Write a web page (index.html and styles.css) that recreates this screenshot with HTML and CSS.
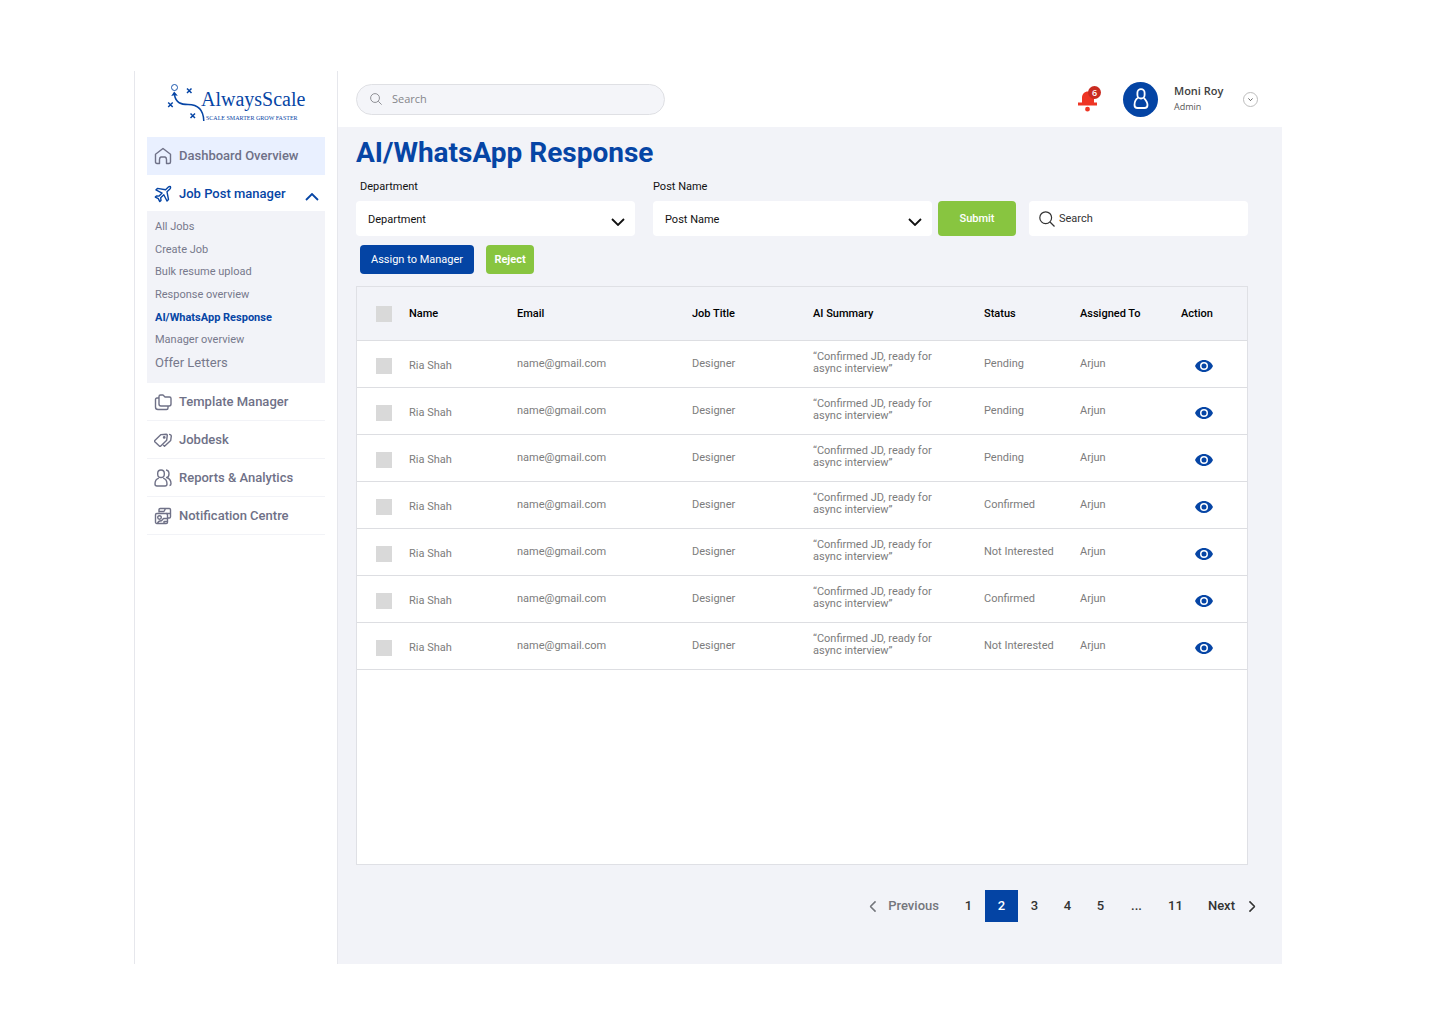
FILE: index.html
```html
<!DOCTYPE html>
<html lang="en">
<head>
<meta charset="utf-8">
<meta name="viewport" content="width=device-width, initial-scale=1">
<title>AI/WhatsApp Response - AlwaysScale</title>
<link rel="stylesheet" href="styles.css">
</head>
<body>
<svg class="sprite" aria-hidden="true">
  <symbol id="eye" viewBox="0 0 18 12"><path fill="currentColor" fill-rule="evenodd" d="M9 0C5 0 1.600 2.500 0 6c1.600 3.500 5 6 9 6s7.400-2.500 9-6c-1.600-3.500-5-6-9-6zm0 10a4 4 0 1 1 0-8 4 4 0 0 1 0 8zm0-1.500a2.500 2.500 0 1 0 0-5 2.500 2.500 0 0 0 0 5z"/></symbol>
  <symbol id="chevron" viewBox="0 0 14 8"><path fill="none" stroke="currentColor" stroke-width="1.800" d="M1 1l6 6 6-6"/></symbol>
  <symbol id="search" viewBox="0 0 16 16"><circle cx="6.700" cy="6.700" r="5.900" fill="none" stroke="currentColor" stroke-width="1.200"/><path fill="none" stroke="currentColor" stroke-width="1.200" d="M11 11l4.500 4.500"/></symbol>
</svg>
<div class="app">
  <aside class="sidebar">
    <a class="logo" href="#">
      <svg class="logo-mark" viewBox="0 0 38 40" width="38" height="40" fill="none" stroke="currentColor" aria-hidden="true">
        <circle cx="7.500" cy="4.500" r="3" stroke-width="0.900"/>
        <path stroke-width="1.500" d="M7.500 12C9 20 14 21.500 21 21.500c10 0 15.500 6 15.800 16.500"/>
        <path fill="currentColor" stroke="none" d="M7.200 8.500l-3 4.500 3-.8 3.600.6z"/>
        <path stroke-width="1.500" d="M20 5.500l4.500 4.500m0-4.500L20 10M1.200 19.500l4.500 4.500m0-4.500L1.200 24M23.500 30.500L28 35m0-4.500L23.500 35"/>
      </svg>
      <span class="logo-text"><span class="logo-name">AlwaysScale</span><span class="logo-tag">SCALE SMARTER GROW FASTER</span></span>
    </a>
    <nav>
      <a class="nav-item highlighted" href="#">
        <svg viewBox="0 0 18 18" class="nav-icon" aria-hidden="true"><path d="M1.500 15V7.200L9 1.500l7.500 5.700V15q0 1.500-1.500 1.500h-2.500v-4q0-2-1.500-2.500h-4q-1.500.5-1.500 2.500v4H3Q1.500 16.500 1.500 15z"/></svg>
        Dashboard Overview</a>
      <a class="nav-item open" href="#">
        <svg viewBox="0 0 18 18" class="nav-icon" aria-hidden="true"><path d="M11.600 4.800l2.800-2.700c.8-.8 2.200-.8 2.200.1 0 .8-.2 1.400-.7 1.900L13 6.800l1.500 7.700-1.500 1.500-3.200-6.200-3.100 3 .3 2.600-1.200 1.200-1.500-3-3-1.500 1.200-1.200 2.600.2 3-3L1.900 4.900l1.500-1.500z"/></svg>
        <span class="nav-label">Job Post manager</span>
        <svg class="chev up" aria-hidden="true"><use href="#chevron"/></svg></a>
      <ul class="subnav">
        <li><a href="#">All Jobs</a></li>
        <li><a href="#">Create Job</a></li>
        <li><a href="#">Bulk resume upload</a></li>
        <li><a href="#">Response overview</a></li>
        <li><a href="#" class="current" aria-current="page">AI/WhatsApp Response</a></li>
        <li><a href="#">Manager overview</a></li>
        <li><a href="#" class="large">Offer Letters</a></li>
      </ul>
      <a class="nav-item ruled" href="#">
        <svg viewBox="0 0 18 18" class="nav-icon" aria-hidden="true"><path d="M5 3.500q0-1.500 1.500-1.500H9l2 2h4.500Q17 4 17 5.500V11q0 2-2 2H7q-2 0-2-2zM5 5H3Q1.500 5 1.500 6.500V14q0 2.500 2.500 2.500h8.500q1.500 0 1.500-1.500v-2"/></svg>
        Template Manager</a>
      <a class="nav-item ruled" href="#">
        <svg viewBox="0 0 18 18" class="nav-icon" aria-hidden="true"><path d="M.8 9.500L7 3.600l5.300-.4q1 0 1 1l-.6 5L6.800 15q-.8.700-1.500 0L.8 10.800q-.6-.7 0-1.300zM15 3.400q2.300 0 2.300 1.800l-.6 4.300L10.500 15.300 9.300 14"/><circle cx="10.200" cy="6.400" r=".7"/></svg>
        Jobdesk</a>
      <a class="nav-item ruled" href="#">
        <svg viewBox="0 0 18 18" class="nav-icon" aria-hidden="true"><rect x="3.700" y="1" width="6.600" height="7.500" rx="3.300"/><path d="M4.800 9.200Q1 10.500 1 15q0 2 2 2h8q2 0 2-2 0-4.500-3.800-5.800M12 1q3 .3 3 3.800T12.600 8.500q4.400 1.500 4.400 6.200 0 1.500-1.500 1.800"/></svg>
        Reports &amp; Analytics</a>
      <a class="nav-item ruled" href="#">
        <svg viewBox="0 0 18 18" class="nav-icon" aria-hidden="true"><path d="M5 5.500V2.800q0-1.300 1.300-1.300h9q1.200 0 1.200 1.300v7q0 1.200-1.200 1.200h-1.800M5 4.500h5M12 6.500h4.500M11.500 1.500l-1.500 3"/><rect x="1.500" y="6.500" width="12" height="10" rx="1.300"/><circle cx="5.500" cy="10.500" r="1.800"/><path d="M3.500 16.500q1-3 4-2.800l2-2.200h4M10 16.500v-2h3.500"/></svg>
        Notification Centre</a>
    </nav>
  </aside>

  <div class="main">
    <header class="topbar">
      <label class="top-search">
        <svg aria-hidden="true"><use href="#search"/></svg>
        <input type="text" placeholder="Search" aria-label="Search site">
      </label>
      <div class="account">
        <button class="bell" type="button" aria-label="Notifications">
          <svg viewBox="0 0 24 26" width="24" height="26" aria-hidden="true"><path fill="#ee3524" d="M5 17.500V12c0-4 2.500-6.500 6-6.500s6 2.500 6 6.500v5.500zM1 16.500h19v3H1zM10.500 20.800a2.400 2.400 0 1 1 0 4.800 2.400 2.400 0 0 1 0-4.800z"/></svg>
          <span class="badge">6</span>
        </button>
        <span class="avatar">
          <svg viewBox="0 0 16 22" width="16" height="22" fill="none" stroke="#fff" stroke-width="1.800" aria-hidden="true"><rect x="4.400" y="1.200" width="7.200" height="9.300" rx="3.600"/><path d="M5.200 9.800C2.700 11.200 1.500 13.800 1.500 17q0 3 3 3h7q3 0 3-3 0-3.200-3.700-7.200"/></svg>
        </span>
        <div class="who"><strong>Moni Roy</strong><span>Admin</span></div>
        <button class="more" type="button" aria-label="Account menu"><svg aria-hidden="true"><use href="#chevron"/></svg></button>
      </div>
    </header>

    <main class="content">
      <h1>AI/WhatsApp Response</h1>
      <form class="filters">
        <div class="fields">
          <div class="field">
            <label class="field-label inset" for="department">Department</label>
            <div class="select"><select id="department"><option>Department</option></select><svg class="chev" aria-hidden="true"><use href="#chevron"/></svg></div>
          </div>
          <div class="field">
            <label class="field-label" for="post">Post Name</label>
            <div class="select"><select id="post"><option>Post Name</option></select><svg class="chev" aria-hidden="true"><use href="#chevron"/></svg></div>
          </div>
        </div>
        <button class="submit" type="submit">Submit</button>
        <label class="table-search">
          <svg aria-hidden="true"><use href="#search"/></svg>
          <input type="text" placeholder="Search" aria-label="Search responses">
        </label>
      </form>
      <div class="actions">
        <button class="assign" type="button">Assign to Manager</button>
        <button class="reject" type="button">Reject</button>
      </div>

      <div class="table-card">
        <table>
          <colgroup><col class="c-check"><col class="c-name"><col class="c-email"><col class="c-job"><col class="c-summary"><col class="c-status"><col class="c-assigned"><col class="c-action"></colgroup>
          <thead>
            <tr><th><input type="checkbox" aria-label="Select all"></th><th>Name</th><th>Email</th><th>Job Title</th><th>AI Summary</th><th>Status</th><th>Assigned To</th><th>Action</th></tr>
          </thead>
          <tbody>
            <tr><td class="low"><input type="checkbox" aria-label="Select row 1"></td><td class="low">Ria Shah</td><td>name@gmail.com</td><td>Designer</td><td class="summary">“Confirmed JD, ready for<br>async interview”</td><td>Pending</td><td>Arjun</td><td class="low"><button class="view" type="button" aria-label="View"><svg><use href="#eye"/></svg></button></td></tr>
            <tr><td class="low"><input type="checkbox" aria-label="Select row 2"></td><td class="low">Ria Shah</td><td>name@gmail.com</td><td>Designer</td><td class="summary">“Confirmed JD, ready for<br>async interview”</td><td>Pending</td><td>Arjun</td><td class="low"><button class="view" type="button" aria-label="View"><svg><use href="#eye"/></svg></button></td></tr>
            <tr><td class="low"><input type="checkbox" aria-label="Select row 3"></td><td class="low">Ria Shah</td><td>name@gmail.com</td><td>Designer</td><td class="summary">“Confirmed JD, ready for<br>async interview”</td><td>Pending</td><td>Arjun</td><td class="low"><button class="view" type="button" aria-label="View"><svg><use href="#eye"/></svg></button></td></tr>
            <tr><td class="low"><input type="checkbox" aria-label="Select row 4"></td><td class="low">Ria Shah</td><td>name@gmail.com</td><td>Designer</td><td class="summary">“Confirmed JD, ready for<br>async interview”</td><td>Confirmed</td><td>Arjun</td><td class="low"><button class="view" type="button" aria-label="View"><svg><use href="#eye"/></svg></button></td></tr>
            <tr><td class="low"><input type="checkbox" aria-label="Select row 5"></td><td class="low">Ria Shah</td><td>name@gmail.com</td><td>Designer</td><td class="summary">“Confirmed JD, ready for<br>async interview”</td><td>Not Interested</td><td>Arjun</td><td class="low"><button class="view" type="button" aria-label="View"><svg><use href="#eye"/></svg></button></td></tr>
            <tr><td class="low"><input type="checkbox" aria-label="Select row 6"></td><td class="low">Ria Shah</td><td>name@gmail.com</td><td>Designer</td><td class="summary">“Confirmed JD, ready for<br>async interview”</td><td>Confirmed</td><td>Arjun</td><td class="low"><button class="view" type="button" aria-label="View"><svg><use href="#eye"/></svg></button></td></tr>
            <tr><td class="low"><input type="checkbox" aria-label="Select row 7"></td><td class="low">Ria Shah</td><td>name@gmail.com</td><td>Designer</td><td class="summary">“Confirmed JD, ready for<br>async interview”</td><td>Not Interested</td><td>Arjun</td><td class="low"><button class="view" type="button" aria-label="View"><svg><use href="#eye"/></svg></button></td></tr>
          </tbody>
        </table>
      </div>

      <nav class="pagination" aria-label="Pages">
        <a class="prev" href="#"><svg class="chev left" aria-hidden="true"><use href="#chevron"/></svg>Previous</a>
        <a class="page" href="#">1</a>
        <a class="page selected" href="#" aria-current="page">2</a>
        <a class="page" href="#">3</a>
        <a class="page" href="#">4</a>
        <a class="page" href="#">5</a>
        <span class="page wide">...</span>
        <a class="page wide" href="#">11</a>
        <a class="next" href="#">Next<svg class="chev right" aria-hidden="true"><use href="#chevron"/></svg></a>
      </nav>
    </main>
  </div>
</div>
</body>
</html>
```
FILE: styles.css
```css
* { box-sizing: border-box; }

body {
  margin: 0;
  padding: 71px 158px 60px 134px;
  background: #fff;
  font: 400 11px/14px Roboto, "Liberation Sans", sans-serif;
  color: #111;
}

a { color: inherit; text-decoration: none; }
button, input, select { font: inherit; color: inherit; border: 0; margin: 0; padding: 0; background: none; }
button { cursor: pointer; }
svg { display: block; flex: none; }
.sprite { position: absolute; width: 0; height: 0; }

.app { display: flex; min-height: calc(100vh - 131px); }

/* Sidebar */
.sidebar {
  flex: 0 0 204px;
  padding: 0 12px;
  border-left: 1px solid #e6e7ec;
  border-right: 1px solid #e6e7ec;
}
.logo { display: flex; height: 66px; padding: 12px 0 0 20px; color: #0645a5; }
.logo-text { display: flex; flex-direction: column; margin-left: -4px; padding-top: 4px; font-family: "Liberation Serif", serif; white-space: nowrap; }
.logo-name { font-size: 20px; line-height: 24px; }
.logo-tag { padding-left: 5px; font-size: 6px; line-height: 14px; }

.nav-item {
  display: flex;
  align-items: center;
  gap: 7px;
  height: 38px;
  padding: 0 6px 0 7px;
  font-size: 13px;
  font-weight: 500;
  color: #6f7187;
}
.nav-icon { width: 18px; height: 18px; fill: none; stroke: currentColor; stroke-width: 1.4; stroke-linejoin: round; }
.highlighted { background: #e9f0ff; }
.open { height: 36px; padding-top: 2px; color: #0645a5; }
.nav-label { flex: 1; }
.chev { width: 14px; height: 8px; }
.up { margin-top: 5px; transform: rotate(180deg); }
.ruled { border-bottom: 1px solid #f2f3f7; }

.subnav {
  display: flex;
  flex-direction: column;
  justify-content: space-between;
  min-height: 172px;
  margin: 0;
  padding: 6px 8px 10px;
  list-style: none;
  background: #f2f3f8;
  line-height: 20px;
  color: #77798c;
}
.subnav a { display: block; }
.subnav .current { font-weight: 700; color: #0645a5; }
.subnav .large { font-size: 13px; }

/* Top bar */
.main { flex: 1; min-width: 0; display: flex; flex-direction: column; }
.topbar { display: flex; align-items: center; justify-content: space-between; height: 56px; padding: 0 24px 0 18px; font-family: "Open Sans", sans-serif; }
.top-search {
  display: flex; align-items: center; gap: 10px;
  width: 309px; height: 31px; padding: 0 13px;
  border: 1px solid #dfe0e4; border-radius: 16px; background: #f4f5f9;
  color: #85868b;
}
.top-search svg { width: 12px; height: 12px; }
input[type="text"] { flex: 1; min-width: 0; outline: 0; }
input::placeholder { color: inherit; opacity: 1; }
.account { display: flex; align-items: center; }
.bell { position: relative; width: 24px; height: 26px; margin-right: 22px; }
.badge {
  position: absolute; top: 0; right: 0;
  width: 13px; height: 13px; border-radius: 50%;
  background: #c92b20; color: #fff;
  font-size: 9px; font-weight: 600; line-height: 13px; text-align: center;
}
.avatar { display: grid; place-items: center; width: 35px; height: 35px; border-radius: 50%; background: #0444a4; }
.who { display: flex; flex-direction: column; width: 69px; margin-left: 16px; gap: 2px; color: #404040; }
.who strong { font-weight: 600; }
.who span { font-size: 9px; color: #565656; }
.more { display: grid; place-items: center; width: 15px; height: 15px; border: 1px solid #bdbdbd; border-radius: 50%; }
.more svg { width: 5px; height: 3px; }

/* Content */
.content { flex: 1; display: flex; flex-direction: column; padding: 9px 34px 42px 18px; background: #f2f3f8; }
h1 { margin: 0 0 10px; font-size: 28px; line-height: 34px; font-weight: 700; color: #0645a5; }

.filters { display: flex; align-items: flex-end; }
.fields { flex: 576 1 0; display: flex; gap: 18px; margin-right: 6px; }
.field { flex: 1; }
.field-label { display: block; margin-bottom: 7px; }
.inset { padding-left: 4px; }
.select { display: grid; align-items: center; border-radius: 4px; background: #fff; }
.select select { grid-area: 1 / 1; width: 100%; height: 35px; padding: 2px 12px 0; appearance: none; border-radius: 4px; }
.select .chev { grid-area: 1 / 1; justify-self: end; margin: 6px 10px 0 0; pointer-events: none; }
.submit { width: 78px; height: 35px; margin-right: 13px; border-radius: 4px; background: #88c540; color: #fff; font-weight: 500; }
.table-search { flex: 199 1 0; display: flex; align-items: center; gap: 4px; height: 35px; padding: 0 10px; border-radius: 4px; background: #fff; color: #333; }
.table-search svg { width: 16px; height: 16px; }

.actions { display: flex; gap: 12px; margin: 9px 0 12px; padding-left: 4px; }
.actions button { height: 29px; border-radius: 4px; color: #fff; }
.assign { width: 114px; background: #0444a4; }
.actions .reject { width: 48px; background: #88c540; font-weight: 700; }

.table-card { flex: 1; margin-bottom: 25px; border: 1px solid #dfe0e5; background: #fff; }
table { width: 100%; table-layout: fixed; border-collapse: separate; border-spacing: 0; }
.c-check { width: 52px; }
.c-name { width: 108px; }
.c-email { width: 175px; }
.c-job { width: 121px; }
.c-summary { width: 171px; }
.c-status { width: 96px; }
.c-assigned { width: 101px; }
.c-action { width: 66px; }
th, td { padding: 0; border-bottom: 1px solid #dddee2; text-align: left; vertical-align: middle; white-space: nowrap; }
th { height: 54px; background: #f2f3f8; font-weight: 500; color: #000; }
td { height: 47px; color: #7c7c7c; }
th:first-child, td:first-child { padding-left: 19px; }
.low { padding-top: 4px; }
.summary { line-height: 12px; padding-bottom: 2px; }
input[type="checkbox"] { display: block; width: 16px; height: 16px; appearance: none; background: #d9d9d9; }
.view { display: block; margin-left: 14px; color: #0645a5; }
.view svg { width: 18px; height: 12px; }

.pagination { display: flex; justify-content: flex-end; align-items: center; margin-right: -10px; font-size: 13px; font-weight: 500; color: #333; }
.prev, .next { display: flex; align-items: center; }
.prev { gap: 9px; margin-right: 13px; color: #74767c; }
.next { gap: 11px; margin-left: 13px; }
.pagination .chev { width: 12px; height: 7px; }
.left { transform: rotate(90deg); }
.right { transform: rotate(-90deg); }
.page { width: 33px; line-height: 32px; text-align: center; }
.wide { width: 39px; }
.selected { background: #0444a4; color: #fff; }
```
